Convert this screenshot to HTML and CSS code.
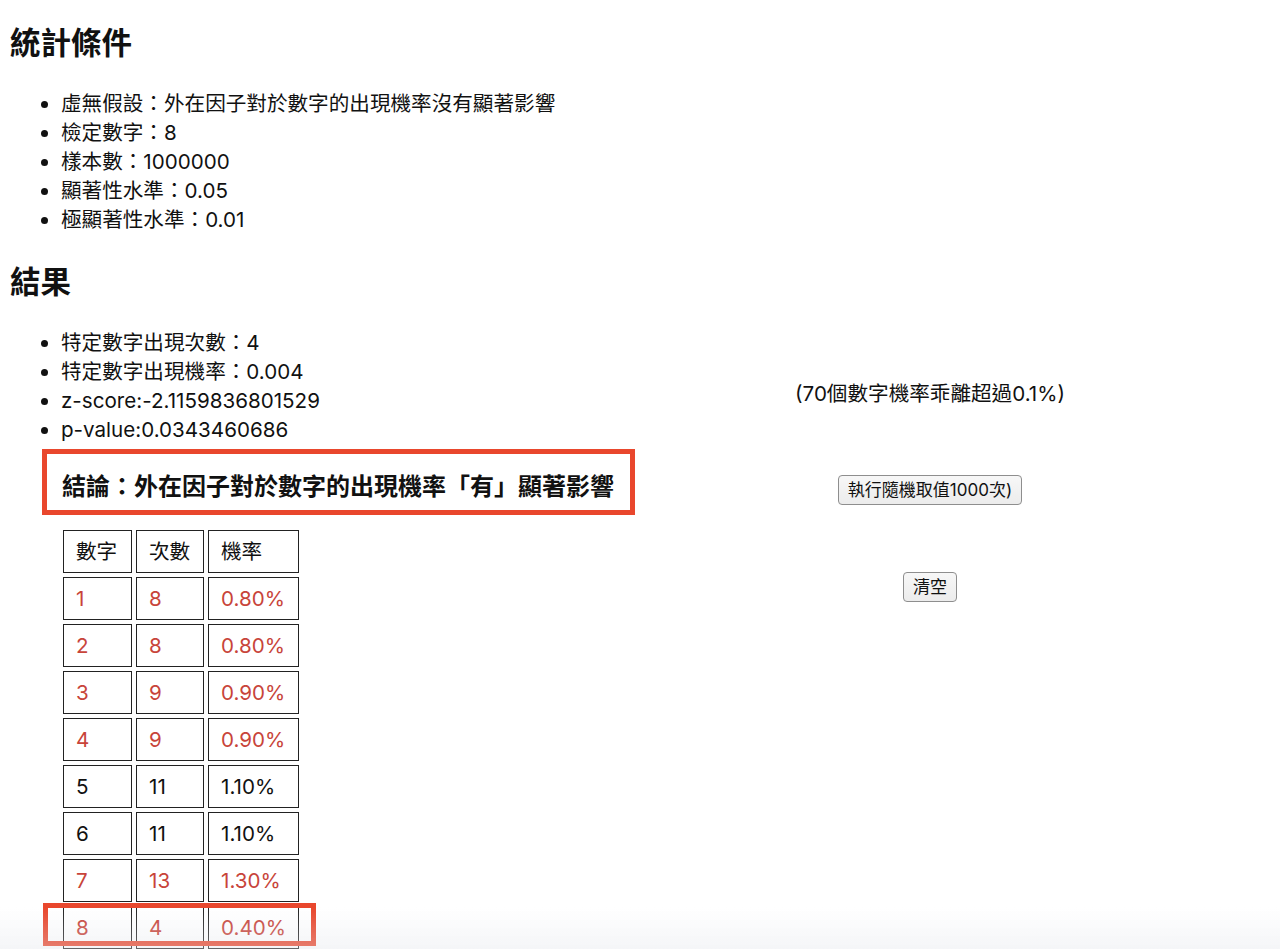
FILE: index.html
```html
<!DOCTYPE html>
<html lang="zh-Hant">
<head>
<meta charset="utf-8">
<title>數字出現機率檢定</title>
<link rel="stylesheet" href="styles.css">
</head>
<body>
<div class="layout">
  <main class="report">
    <h2 class="heading heading-top">統計條件</h2>
    <ul class="facts">
      <li>虛無假設：外在因子對於數字的出現機率沒有顯著影響</li>
      <li>檢定數字：8</li>
      <li>樣本數：1000000</li>
      <li>顯著性水準：0.05</li>
      <li>極顯著性水準：0.01</li>
    </ul>

    <h2 class="heading">結果</h2>
    <ul class="facts">
      <li>特定數字出現次數：4</li>
      <li>特定數字出現機率：0.004</li>
      <li>z-score:-2.1159836801529</li>
      <li>p-value:0.0343460686</li>
    </ul>

    <h3 class="verdict">結論：外在因子對於數字的出現機率「有」顯著影響</h3>

    <table class="freq">
      <thead>
        <tr><th>數字</th><th>次數</th><th>機率</th></tr>
      </thead>
      <tbody>
        <tr class="off"><td>1</td><td>8</td><td>0.80%</td></tr>
        <tr class="off"><td>2</td><td>8</td><td>0.80%</td></tr>
        <tr class="off"><td>3</td><td>9</td><td>0.90%</td></tr>
        <tr class="off"><td>4</td><td>9</td><td>0.90%</td></tr>
        <tr><td>5</td><td>11</td><td>1.10%</td></tr>
        <tr><td>6</td><td>11</td><td>1.10%</td></tr>
        <tr class="off"><td>7</td><td>13</td><td>1.30%</td></tr>
        <tr class="off"><td class="target">8<span class="target-ring"></span></td><td>4</td><td>0.40%</td></tr>
        <tr><td>9</td><td>10</td><td>1.00%</td></tr>
        <tr class="off"><td>10</td><td>12</td><td>1.20%</td></tr>
      </tbody>
    </table>
  </main>

  <aside class="controls">
    <p class="summary">(70個數字機率乖離超過0.1%)</p>
    <button class="btn" type="button">執行隨機取值1000次)</button>
    <button class="btn" type="button">清空</button>
  </aside>
</div>
<div class="fade"></div>
</body>
</html>
```

FILE: styles.css
```css
html, body {
  background: #fff;
}

body {
  margin: 0 10px;
  color: #111;
  font-family: Inter, "Noto Sans CJK TC", sans-serif;
  font-size: 20.6px;
  line-height: 29px;
}

.layout {
  display: grid;
  grid-template-columns: 630px 580px;
  align-items: start;
}

/* section titles */
.heading {
  margin: 30px 0 0;
  font-size: 30.5px;
  line-height: 36px;
  font-weight: 700;
}

.heading-top {
  margin-top: 25px;
}

.facts {
  margin: 27px 0 0;
  padding-left: 51px;
}

.heading + .facts {
  margin-top: 28px;
}

/* conclusion, framed in red */
.verdict {
  display: inline-block;
  margin: 5px 0 0 32px;
  padding: 16px 16px 6px 15px;
  border: 5px solid #e9472d;
  font-size: 24px;
  line-height: 34px;
  font-weight: 700;
  white-space: nowrap;
}

/* frequency table */
.freq {
  margin: 11px 0 0 49px;
  border-spacing: 4px;
}

.freq th,
.freq td {
  border: 1px solid #222;
  padding: 6px 12px;
  text-align: left;
  font-weight: 400;
  line-height: 29px;
  white-space: nowrap;
}

.freq th:nth-child(1), .freq td:nth-child(1) { width: 43px; }
.freq th:nth-child(2), .freq td:nth-child(2) { width: 42px; }
.freq th:nth-child(3), .freq td:nth-child(3) { width: 64px; }

.freq tr.off td {
  color: #c8443a;
}

.target {
  position: relative;
}

.target-ring {
  position: absolute;
  left: -21px;
  top: -4px;
  width: 273px;
  height: 43px;
  box-sizing: border-box;
  border: 5px solid #e9472d;
}

/* right-hand controls */
.controls {
  display: flex;
  flex-direction: column;
  align-items: center;
  gap: 67px;
  padding-top: 379px;
}

.summary {
  margin: 0;
}

.btn {
  height: 30px;
  padding: 0 9px;
  font-family: Inter, "Noto Sans CJK TC", sans-serif;
  font-size: 17px;
  line-height: 28px;
  color: #111;
  background: linear-gradient(#f7f7f7, #ececec);
  border: 1px solid #8e8e8e;
  border-radius: 4px;
}

/* soft shade along the bottom edge of the window */
.fade {
  position: fixed;
  left: 0;
  right: 0;
  bottom: 0;
  height: 42px;
  pointer-events: none;
  background: linear-gradient(to bottom, rgba(225, 228, 234, 0), rgba(225, 228, 234, 0.35));
}
```
